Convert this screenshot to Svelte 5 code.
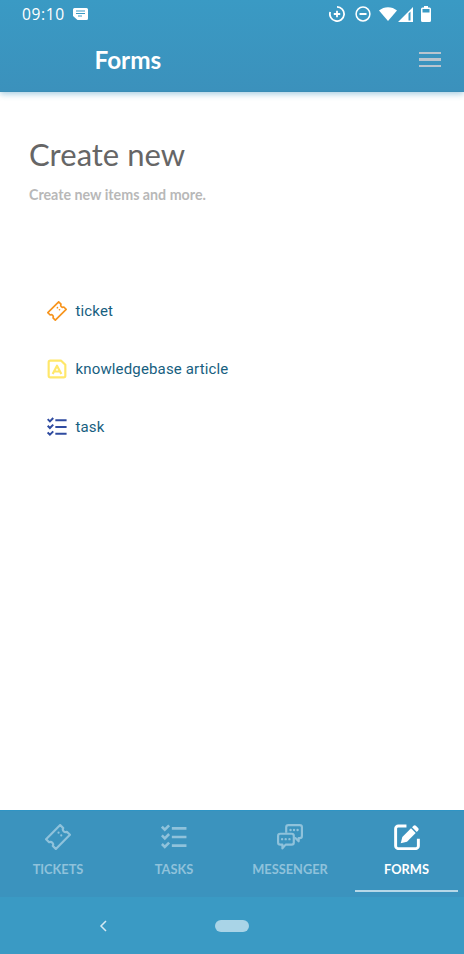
<script>
  const items = [
    { label: "ticket", icon: "ticket", color: "#f7941d" },
    { label: "knowledgebase article", icon: "article", color: "#ffe76a" },
    { label: "task", icon: "tasks", color: "#2f4ba0" }
  ];

  const tabs = [
    { label: "TICKETS", icon: "ticket" },
    { label: "TASKS", icon: "tasks" },
    { label: "MESSENGER", icon: "chat" },
    { label: "FORMS", icon: "edit", active: true }
  ];
</script>

{#snippet icon(name)}
  {#if name === "ticket"}
    <svg viewBox="0 0 24 24" fill="none" stroke="currentColor" stroke-width="2" stroke-linejoin="round">
      <path d="M1 14 14 1l2.800 2.800a2.500 2.500 0 0 0 3.400 3.400L23 10 10 23l-2.800-2.800a2.500 2.500 0 0 0-3.400-3.400z" />
      <path d="M12.500 8h.01M15 10.500h.01" stroke-linecap="round" />
    </svg>
  {:else if name === "article"}
    <svg viewBox="0 0 24 24" fill="none" stroke="currentColor" stroke-width="2.600" stroke-linejoin="round">
      <path d="M4 2h13l5 5v13a2 2 0 0 1-2 2H4a2 2 0 0 1-2-2V4a2 2 0 0 1 2-2z" />
      <path d="M6.800 18 12 8l5.200 10M8.800 15h6.400" />
    </svg>
  {:else if name === "tasks"}
    <svg viewBox="0 0 24 24" fill="none" stroke="currentColor" stroke-width="2.400">
      <path d="m.8 2.500 2.700 2.700L7.500 1.200M.8 10.500l2.700 2.700 4-4M.8 18.500l2.700 2.700 4-4" />
      <path d="M10 4h13.500M10 12h13.500M10 20h13.500" />
    </svg>
  {:else if name === "chat"}
    <svg viewBox="0 0 24 24" fill="none" stroke="currentColor" stroke-width="2" stroke-linejoin="round">
      <path d="M8.500 8V3a2 2 0 0 1 2-2H21a2 2 0 0 1 2 2v8a2 2 0 0 1-2 2h-1v3l-3-3h-1" />
      <path d="M3 9h10.500a2 2 0 0 1 2 2v6a2 2 0 0 1-2 2H8l-3 3.500V19H3a2 2 0 0 1-2-2v-6a2 2 0 0 1 2-2z" />
      <path d="M12.500 5.500h.01M15.700 5.500h.01M19 5.500h.01M4.700 14h.01M8 14h.01M11.500 14h.01" stroke-linecap="round" stroke-width="2.200" />
    </svg>
  {:else}
    <svg viewBox="0 0 24 24">
      <path d="M11.500 1.800H4A2.500 2.500 0 0 0 1.500 4.300v15.900A2.500 2.500 0 0 0 4 22.700h16a2.500 2.500 0 0 0 2.500-2.500v-6.700" fill="none" stroke="currentColor" stroke-width="2.700" />
      <path d="M6.200 17.800 7.700 12 15.700 4l4.300 4.300-8 8z" fill="currentColor" />
      <path d="M16.700 3 18 1.700a1.600 1.600 0 0 1 2.200 0l2.100 2.100a1.600 1.600 0 0 1 0 2.200L21 7.300z" fill="currentColor" />
    </svg>
  {/if}
{/snippet}

<div class="screen">
  <div class="top">
    <div class="status">
      <div class="status-left">
        <span class="time">09:10</span>
        <svg class="note" viewBox="0 0 15 12">
          <path d="M1.500 0h12A1.500 1.500 0 0 1 15 1.500v9a1.500 1.500 0 0 1-1.500 1.500h-9L0 8V1.500A1.500 1.500 0 0 1 1.500 0z" fill="#fff" />
          <path d="M3 3h9M3 5.500h9M5 8h4" stroke="#3a9ac4" stroke-width="1.100" />
        </svg>
      </div>
      <div class="status-right">
        <svg viewBox="0 0 16 16" fill="none" stroke="#fff" stroke-width="1.800">
          <path d="M8 .9a7.100 7.100 0 1 1-6.800 5" />
          <path d="M4.800 8h6.400M8 4.800v6.400" stroke-width="1.800" />
        </svg>
        <svg viewBox="0 0 16 16" fill="none" stroke="#fff" stroke-width="1.500">
          <circle cx="8" cy="8" r="6.900" />
          <path d="M4.500 8h7" stroke-width="2" />
        </svg>
        <svg class="wifi" viewBox="0 0 18 14" fill="none">
          <path d="M0 3.500C5-1 13-1 18 3.500L9 14z" fill="#fff" />
        </svg>
        <svg class="signal" viewBox="0 0 15 15">
          <path d="M0 15 15 0v15zM10.500 6.500V13.500H12.500V4.500z" fill="#fff" fill-rule="evenodd" />
        </svg>
        <svg class="battery" viewBox="0 0 10 16">
          <path d="M3 0h4v1.500h1.500A1.500 1.500 0 0 1 10 3v11.500a1.500 1.500 0 0 1-1.500 1.500h-7A1.500 1.500 0 0 1 0 14.500V3a1.500 1.500 0 0 1 1.500-1.500H3z" fill="#fff" />
          <rect x="1.500" y="3" width="7" height="3.500" fill="#3a9ac4" />
        </svg>
      </div>
    </div>
    <header>
      <h1>Forms</h1>
      <div class="menu" aria-label="Menu"><span></span><span></span><span></span></div>
    </header>
  </div>

  <main>
    <h2>Create new</h2>
    <p>Create new items and more.</p>
    <ul>
      {#each items as item}
        <li>
          <span class="item-icon" style="color: {item.color}">{@render icon(item.icon)}</span>
          {item.label}
        </li>
      {/each}
    </ul>
  </main>

  <nav>
    {#each tabs as tab}
      <div class="tab" class:active={tab.active}>
        <span class="tab-icon">{@render icon(tab.icon)}</span>
        <span class="tab-label">{tab.label}</span>
      </div>
    {/each}
  </nav>

  <div class="system">
    <svg viewBox="0 0 8 12" fill="none" stroke="#d5e9f3" stroke-width="1.500"><path d="M7 1 2 6l5 5" /></svg>
    <span class="pill"></span>
  </div>
</div>

<style>
  :global(body) {
    margin: 0;
    background: #fff;
  }

  .screen {
    width: 464px;
    height: 954px;
    display: flex;
    flex-direction: column;
    font-family: Lato, sans-serif;
    overflow: hidden;
  }

  .top {
    height: 92px;
    flex-shrink: 0;
    background: linear-gradient(#3a9ac4, #3b91bc);
    box-shadow: 0 2px 6px rgba(60, 145, 188, 0.45);
    border-bottom: 1px solid #3a8db6;
    box-sizing: border-box;
    position: relative;
  }

  .status {
    height: 28px;
    display: flex;
    justify-content: space-between;
    align-items: center;
    padding: 0 33px 0 22px;
  }

  .status-left,
  .status-right {
    display: flex;
    align-items: center;
  }

  .time {
    font-size: 15.6px;
    letter-spacing: 0.6px;
    color: #fff;
    font-family: "Open Sans", sans-serif;
  }

  .note {
    width: 15px;
    height: 12px;
    margin-left: 8px;
  }

  .status-right {
    gap: 10px;
  }

  .status-right svg {
    width: 16px;
    height: 16px;
  }

  .status-right .wifi {
    width: 18px;
    height: 14px;
    margin-left: -2px;
  }

  .status-right .signal {
    width: 15px;
    height: 15px;
    margin-left: -9px;
  }

  .status-right .battery {
    width: 10px;
    height: 16px;
    margin-left: -2px;
  }

  header {
    display: flex;
    justify-content: space-between;
    align-items: center;
    height: 63px;
    padding: 0 23px 0 94.5px;
  }

  h1 {
    margin: 0;
    font-size: 24.3px;
    font-weight: 700;
    color: #fff;
  }

  .menu {
    display: flex;
    flex-direction: column;
    gap: 4px;
    width: 22px;
  }

  .menu span {
    height: 2.5px;
    background: #b9c5cf;
  }

  main {
    flex: 1;
    padding: 42px 29px 0;
  }

  h2 {
    margin: 0;
    font-size: 31px;
    font-weight: 400;
    line-height: 40px;
    color: #666;
  }

  p {
    margin: 11px 0 0;
    font-size: 14.25px;
    font-weight: 700;
    line-height: 20px;
    color: #b8b8b8;
  }

  ul {
    list-style: none;
    margin: 77px 0 0;
    padding: 0 0 0 18px;
  }

  li {
    display: flex;
    align-items: center;
    gap: 8.5px;
    height: 58px;
    font-family: Roboto, sans-serif;
    font-size: 15px;
    letter-spacing: 0.15px;
    color: #17607f;
  }

  .item-icon {
    display: flex;
    width: 20px;
    height: 20px;
  }

  .item-icon svg {
    width: 100%;
    height: 100%;
  }

  nav {
    height: 87px;
    flex-shrink: 0;
    display: grid;
    grid-template-columns: repeat(4, 1fr);
    background: #3b93be;
    border-top: 1px solid #2f94c4;
    box-sizing: border-box;
  }

  .tab {
    display: flex;
    flex-direction: column;
    align-items: center;
    padding-top: 13px;
    color: #8fc2db;
    box-sizing: border-box;
  }

  .tab.active {
    color: #fff;
    border-bottom: 2px solid #b6d8e8;
    margin: 0 6px 5px 7px;
  }

  .tab-icon {
    display: flex;
    width: 26px;
    height: 26px;
  }

  .tab-icon svg {
    width: 100%;
    height: 100%;
  }

  .tab-label {
    margin-top: 11px;
    font-size: 12.8px;
    font-weight: 700;
  }

  .system {
    height: 57px;
    flex-shrink: 0;
    background: #3a9ac4;
    position: relative;
    display: flex;
    align-items: center;
    justify-content: center;
    padding-top: 1px;
    box-sizing: border-box;
  }

  .system svg {
    position: absolute;
    left: 99px;
    top: 23px;
    width: 8px;
    height: 12px;
  }

  .pill {
    width: 34px;
    height: 12px;
    border-radius: 6px;
    background: #a9d4e7;
  }
</style>
